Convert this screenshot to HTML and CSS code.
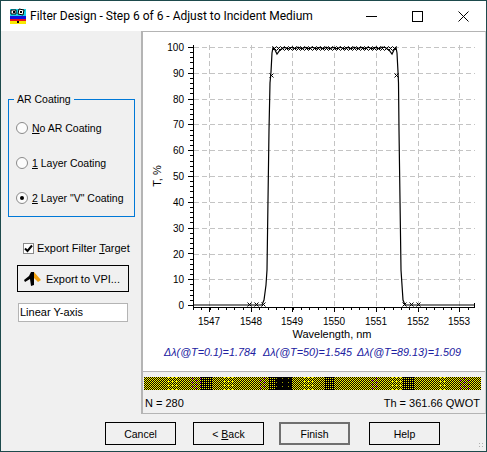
FILE: index.html
```html
<!DOCTYPE html>
<html lang="en">
<head>
	<meta charset="UTF-8">
	<title>Filter Design</title>
	<link rel="stylesheet" href="styles.css">
</head>
<body>
	<div class="window">
		<div class="titlebar">
			<svg class="appicon" width="18" height="16" viewBox="0 0 18 16">
				<rect x="1" y="1" width="16" height="7" fill="#19d3e8"/>
				<path d="M2 2h5v4H2zM10 1l5 1-1 5-5-1z" fill="#fff" stroke="#000"/>
				<path d="M4 3h2v2H4zM11 3h2v2h-2z" fill="#000"/>
				<rect x="1" y="8" width="16" height="3" fill="#1010e0"/>
				<rect x="1" y="11" width="16" height="2" fill="#e8101c"/>
				<rect x="1" y="13" width="16" height="3" fill="#f8e800"/>
				<rect x="8" y="13" width="2" height="2" fill="#000"/>
			</svg>
			<span class="title">Filter Design - Step 6 of 6 - Adjust to Incident Medium</span>
			<div class="caption">
				<span class="capbtn"><svg width="11" height="11"><path d="M0 5.5h11" class="capline"/></svg></span>
				<span class="capbtn"><svg width="11" height="11"><rect x="0.5" y="0.5" width="10" height="10" class="capline"/></svg></span>
				<span class="capbtn"><svg width="11" height="11"><path d="M0.5 0.5l10 10M10.5 0.5l-10 10" class="capline"/></svg></span>
			</div>
		</div>

		<div class="main">
			<div class="sidebar">
				<fieldset class="group">
					<legend>AR Coating</legend>
					<div class="radio"><span class="dot"></span><span><u>N</u>o AR Coating</span></div>
					<div class="radio"><span class="dot"></span><span><u>1</u> Layer Coating</span></div>
					<div class="radio"><span class="dot on"></span><span><u>2</u> Layer "V" Coating</span></div>
				</fieldset>
				<div class="check">
					<span class="box"><svg width="9" height="9"><path d="M1 4.5l2.5 2.5L8 1.5" class="tick"/></svg></span>
					<span>Export Filter <u>T</u>arget</span>
				</div>
				<div class="btn export">
					<svg width="18" height="16" viewBox="0 0 18 16">
						<path d="M10 1l7 8-3 2-4-4z" fill="#f0a010"/>
						<path d="M0 9l5-4 2-4h3v13l-3 1-1-7-5 3z" fill="#000"/>
					</svg>
					<span>Export to VPI...</span>
				</div>
				<div class="textbox">Linear Y-axis</div>
			</div>

			<div class="right">
				<div class="plot">
					<svg id="chart" width="342" height="340" viewBox="143 32 342 340">
						<g id="grid"></g>
						<g class="ylab">
							<text x="184" y="51">100</text>
							<text x="184" y="77">90</text>
							<text x="184" y="103">80</text>
							<text x="184" y="128">70</text>
							<text x="184" y="154">60</text>
							<text x="184" y="180">50</text>
							<text x="184" y="206">40</text>
							<text x="184" y="232">30</text>
							<text x="184" y="258">20</text>
							<text x="184" y="283">10</text>
							<text x="184" y="309">0</text>
						</g>
						<g class="xlab">
							<text x="209" y="325">1547</text>
							<text x="251" y="325">1548</text>
							<text x="292" y="325">1549</text>
							<text x="334" y="325">1550</text>
							<text x="376" y="325">1551</text>
							<text x="418" y="325">1552</text>
							<text x="459" y="325">1553</text>
						</g>
						<text class="axname" x="332" y="338">Wavelength, nm</text>
						<text class="axname" transform="translate(161 176) rotate(-90)">T, %</text>
						<text class="delta" x="164" y="356">Δλ(@T=0.1)=1.784</text>
						<text class="delta" x="263" y="356">Δλ(@T=50)=1.545</text>
						<text class="delta" x="357" y="356">Δλ(@T=89.13)=1.509</text>
					</svg>
				</div>
				<div class="stripwrap">
					<canvas id="strip" width="337" height="13"></canvas>
					<div class="stats">
						<span>N = 280</span>
						<span>Th = 361.66 QWOT</span>
					</div>
				</div>
			</div>
		</div>

		<div class="footer">
			<div class="btn cancel">Cancel</div>
			<div class="btn back"><span>&lt; <u>B</u>ack</span></div>
			<div class="btn finish">Finish</div>
			<div class="btn help">Help</div>
		</div>
		<div class="grip"></div>
	</div>
	<script src="plot.js"></script>
</body>
</html>
```

FILE: styles.css
```css
* {
	margin: 0;
	padding: 0;
	box-sizing: border-box;
}
body {
	width: 487px;
	height: 452px;
	overflow: hidden;
	background: #1d4a4c;
	font-family: "Liberation Sans", Arial, sans-serif;
	font-size: 11px;
	color: #000;
}
.window {
	position: relative;
	width: 485px;
	height: 450px;
	margin: 1px;
	background: #f0f0f0;
	display: flex;
	flex-direction: column;
}
.titlebar {
	height: 30px;
	background: #fff;
	display: flex;
	align-items: center;
	padding-left: 8px;
	flex: none;
}
.appicon {
	margin-right: 3px;
}
.title {
	font-family: Roboto, sans-serif;
	font-size: 12px;
	flex: 1;
}
.caption {
	display: flex;
}
.capbtn {
	width: 46px;
	height: 30px;
	display: flex;
	align-items: center;
	justify-content: center;
}
.capline {
	fill: none;
	stroke: #000;
	stroke-width: 1;
}
.main {
	display: flex;
	height: 383px;
	flex: none;
}
.sidebar {
	width: 140px;
	flex: none;
	padding: 62px 0 0 7px;
}
.group {
	width: 127px;
	height: 124px;
	border: 1px solid #0078d7;
	padding: 12px 0 0 7px;
	display: flex;
	flex-direction: column;
	gap: 15px;
	font-size: 10.5px;
}
.group legend {
	margin-left: -2px;
	padding: 0 3px;
	line-height: 13px;
}
.radio {
	display: flex;
	align-items: center;
	height: 20px;
	gap: 4px;
}
.dot {
	position: relative;
	width: 12px;
	height: 12px;
	border: 1px solid #8a8a8a;
	border-radius: 50%;
	background: #fcfcfc;
	flex: none;
}
.dot.on::after {
	content: "";
	position: absolute;
	left: 3px;
	top: 3px;
	width: 4px;
	height: 4px;
	border-radius: 50%;
	background: #000;
}
.check {
	display: flex;
	align-items: center;
	gap: 3px;
	margin: 24px 0 0 15px;
	height: 14px;
}
.box {
	width: 11px;
	height: 11px;
	border: 1px solid #8a8a8a;
	background: #fff;
	display: flex;
	flex: none;
}
.tick {
	fill: none;
	stroke: #000;
	stroke-width: 2;
}
.btn {
	border: 1px solid #000;
	background: #f0f0f0;
	display: flex;
	align-items: center;
	justify-content: center;
}
.export {
	width: 112px;
	height: 27px;
	margin: 10px 0 0 9px;
	padding-left: 6px;
	gap: 4px;
	justify-content: flex-start;
}
.textbox {
	width: 110px;
	height: 19px;
	margin: 11px 0 0 10px;
	border: 1px solid #b4b4b4;
	background: #fff;
	padding-left: 1px;
	line-height: 17px;
}
.right {
	flex: 1;
	display: flex;
	flex-direction: column;
	border-left: 2px solid #b4b4b4;
	border-top: 1px solid #b4b4b4;
	border-bottom: 1px solid #b4b4b4;
	border-right: 1px solid #d0d0d0;
}
.plot {
	height: 340px;
	background: #fff;
	border-bottom: 1px solid #b4b4b4;
	flex: none;
	overflow: hidden;
}
#chart {
	display: block;
}
.ylab text {
	font-size: 10px;
	text-anchor: end;
}
.xlab text {
	font-size: 10px;
	text-anchor: middle;
}
.axname {
	font-size: 11px;
	text-anchor: middle;
}
.delta {
	font-size: 10.8px;
	font-style: italic;
	fill: #2020a0;
}
.stripwrap {
	flex: 1;
	padding: 5px 2px 0 1px;
}
#strip {
	display: block;
}
.stats {
	display: flex;
	justify-content: space-between;
	padding: 7px 3px 0 1px;
}
.footer {
	flex: 1;
	display: flex;
	padding: 8px 0 0 104px;
	font-size: 10.5px;
}
.footer .btn {
	height: 23px;
	width: 71px;
}
.back {
	margin-left: 17px;
}
.finish {
	margin-left: 15px;
	border: 2px solid #707070;
}
.footer .help {
	margin-left: 19px;
}
.grip {
	position: absolute;
	right: 1px;
	bottom: 2px;
	width: 7px;
	height: 7px;
	background: radial-gradient(circle, #b0b0b0 1px, transparent 1px) 0 0 / 3px 3px;
}
```

FILE: plot.js
```js
// chart lines
var NS='http://www.w3.org/2000/svg';
var grid=document.getElementById('grid');

function add(tag,attrs){
	var el=document.createElementNS(NS,tag);
	for(var k in attrs){
		el.setAttribute(k,attrs[k]);
	}
	grid.appendChild(el);
	return el;
}
function line(x1,y1,x2,y2,color,width,dash){
	var a={x1:x1,y1:y1,x2:x2,y2:y2,stroke:color,'stroke-width':width||1};
	if(dash){
		a['stroke-dasharray']=dash;
	}
	return add('line',a);
}
function cross(x,y){
	line(x-2,y-2,x+2,y+2,'#000');
	line(x+2,y-2,x-2,y+2,'#000');
}

var ys=[47.5,73.5,99.5,124.5,150.5,176.5,202.5,228.5,254.5,279.5,305.5];
var xs=[209.5,251.5,292.5,334.5,376.5,418.5,459.5];
var i;

for(i=0;i<10;i++){
	line(194,ys[i],475,ys[i],'#c4c4c4',1,'5 3');
}
for(i=0;i<xs.length;i++){
	line(xs[i],45,xs[i],306,'#c4c4c4',1,'5 3');
	line(xs[i],307,xs[i],312,'#000');
}
// x minor ticks
for(i=0;i<34;i++){
	var mx=Math.round(209.5-8.33*2+8.33*i)+0.5;
	if(mx>193 && mx<475){
		line(mx,307,mx,310,'#000');
	}
}
// y ticks
for(i=0;i<=50;i++){
	var ty=Math.round(47+i*5.16)+0.5;
	line(i%5==0?188:190,ty,193,ty,'#000');
}
line(193.5,45,193.5,308,'#000');
line(193,307.5,475,307.5,'#000');
line(474.5,303,474.5,307,'#000');

// curve
var pts=[[193,305],[262,305],[264,300],[266,285],[267,270],[268,200],[269,130],[270,83],[271,72],[272,53],[273,47.5],
	[275,50],[277,54],[280,50],[284,47.5]];
for(var x=286;x<384;x+=2){
	pts.push([x,48+Math.sin(x*0.9)*0.8]);
}
pts=pts.concat([[385,47.5],[389,50],[392,54],[394,50],[396,47.5],[397,53],[398,72],[398.5,83],[399,130],[400,200],
	[401,270],[402,285],[403,300],[405,305],[474,305]]);
var d='';
for(i=0;i<pts.length;i++){
	d+=(i?'L':'M')+pts[i][0]+' '+pts[i][1];
}
add('path',{d:d,fill:'none',stroke:'#000','stroke-width':1.2});

// measured points
for(i=274;i<396;i+=4){
	cross(i+0.5,48.5);
}
cross(271.5,75.5);
cross(396.5,75.5);
var low=[249,256,263,404,411,418];
for(i=0;i<low.length;i++){
	cross(low[i]+0.5,304.5);
}

// layer strip
var c=document.getElementById('strip').getContext('2d');
var bands='yyYymdyYyymdyyYydyyymyYdyyYymy';
for(var px=0;px<337;px++){
	var mode=bands.charAt(Math.floor(px/337*bands.length));
	if(px>130 && px<148){
		mode='k';
	}
	for(var py=0;py<13;py++){
		var col='#000';
		var odd=(px+py)%2==1;
		if(mode=='Y'){
			col=(odd || (py%4==0 && px%4==0))?'#f8f000':'#000';
		}else if(mode=='y'){
			col=odd?'#f8f000':'#000';
		}else if(mode=='d'){
			col=(px%2==0 && py%2==1)?'#f8f000':'#000';
		}else if(mode=='m'){
			col=odd?'#f8f000':'#000';
			if((px%8==0 && py%4==1) || (px%8==4 && py%4==3)){
				col='#e020e0';
			}
		}else if(mode=='k'){
			col=(px%6==0 && py%4==1)?'#a0a000':'#000';
		}
		c.fillStyle=col;
		c.fillRect(px,py,1,1);
	}
}
```
